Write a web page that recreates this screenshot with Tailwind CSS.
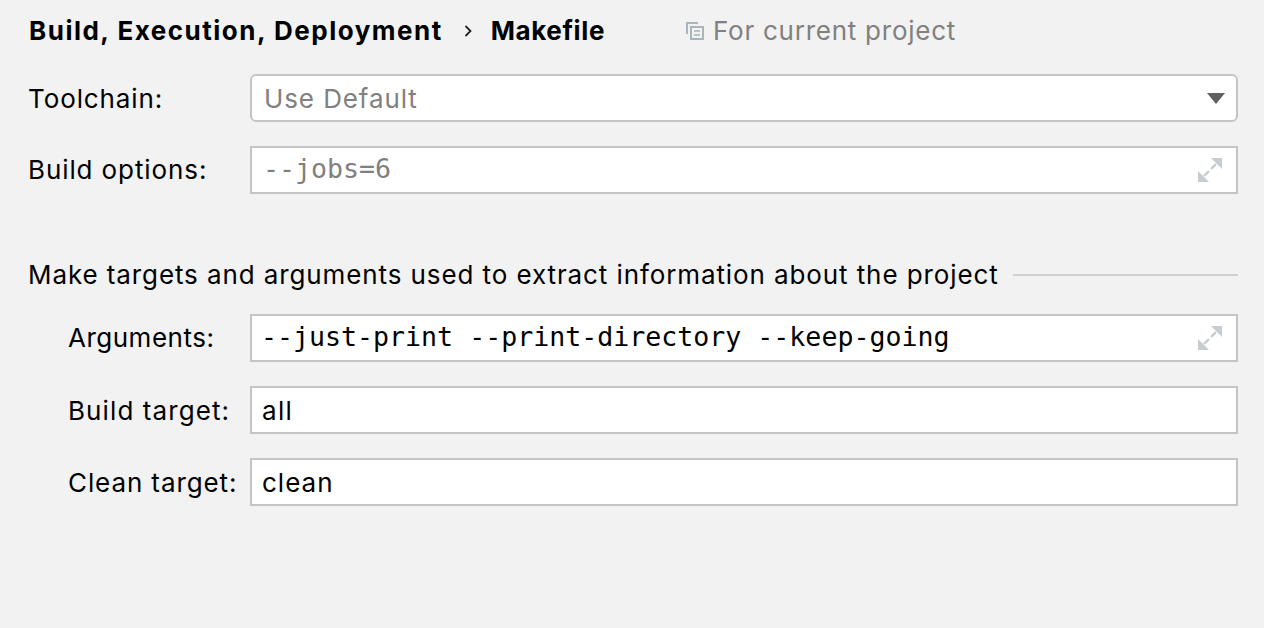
<!DOCTYPE html>
<html lang="en">
<head>
  <meta charset="UTF-8" />
  <title>Makefile settings</title>
  <script src="https://cdn.jsdelivr.net/npm/@tailwindcss/browser@4"></script>
</head>
<body class="bg-[#f2f2f2] text-black font-['Inter',sans-serif] text-[26px] leading-[32px] tracking-[0.9px] w-[1264px] h-[628px] overflow-hidden">
  <main class="pl-[28px] pr-[26px]">

    <!-- breadcrumb -->
    <header class="flex items-center h-[32px] mt-[15px] font-bold">
      <span class="ml-[1px] tracking-[1.5px]">Build, Execution, Deployment</span>
      <svg class="ml-[21px] w-[8px] h-[12px]" viewBox="0 0 8 12" fill="none" stroke="#222" stroke-width="1.8"><path d="M1.5 1l5 5-5 5"/></svg>
      <span class="ml-[19px] tracking-[0.6px]">Makefile</span>
      <svg class="ml-[81px] w-[18px] h-[18px]" viewBox="0 0 18 18" fill="none" stroke="#aab4bb" stroke-width="2"><path d="M12 1H1v11"/><rect x="5" y="5" width="12" height="12"/><path d="M8 9h6M8 13h6" stroke-width="1.5"/></svg>
      <span class="ml-[9px] font-normal text-[#808080] tracking-[0.75px]">For current project</span>
    </header>

    <!-- toolchain -->
    <div class="flex items-center h-[48px] mt-[27px]">
      <label class="w-[222px] pt-[2px]">Toolchain:</label>
      <div class="flex-1 h-full flex items-center justify-between bg-white border-2 border-[#c4c4c4] rounded-[6px] pl-[12px] pr-[11px] text-[#808080]">
        <span class="pt-[2px]">Use Default</span>
        <svg class="w-[18px] h-[11px]" viewBox="0 0 18 11" fill="#606060"><path d="M0 0h18l-9 11z"/></svg>
      </div>
    </div>

    <div class="flex items-center h-[48px] mt-[24px]">
      <label class="w-[222px]">Build options:</label>
      <div class="flex-1 h-full flex items-center justify-between bg-white border-2 border-[#c4c4c4] pl-[11px] pr-[14px] text-[#808080] font-['DejaVu_Sans_Mono',monospace] text-[26.6px] tracking-normal">
        <span class="pb-[2px]">--jobs=6</span>
        <svg class="w-[24px] h-[24px]" viewBox="0 0 24 24" fill="#c5cdd1" stroke="#c5cdd1"><path d="M24 0v11L13 0z" stroke="none"/><path d="M18 6l-5 5" stroke-width="2.4"/><path d="M0 24V13l11 11z" stroke="none"/><path d="M6 18l5-5" stroke-width="2.4"/></svg>
      </div>
    </div>

    <!-- make targets section -->
    <div class="flex items-center h-[32px] mt-[65px]">
      <span>Make targets and arguments used to extract information about the project</span>
      <div class="flex-1 ml-[14px] h-[2px] bg-[#d1d1d1]"></div>
    </div>

    <div class="flex items-center h-[48px] mt-[23px]">
      <label class="w-[182px] ml-[40px] tracking-[0.5px]">Arguments:</label>
      <div class="flex-1 h-full flex items-center justify-between bg-white border-2 border-[#c4c4c4] pl-[9px] pr-[14px] font-['DejaVu_Sans_Mono',monospace] text-[26.6px] tracking-normal">
        <span class="pb-[2px]">--just-print --print-directory --keep-going</span>
        <svg class="w-[24px] h-[24px]" viewBox="0 0 24 24" fill="#c5cdd1" stroke="#c5cdd1"><path d="M24 0v11L13 0z" stroke="none"/><path d="M18 6l-5 5" stroke-width="2.4"/><path d="M0 24V13l11 11z" stroke="none"/><path d="M6 18l5-5" stroke-width="2.4"/></svg>
      </div>
    </div>

    <div class="flex items-center h-[48px] mt-[24px]">
      <label class="w-[182px] ml-[40px] pt-[2px] tracking-[1.1px]">Build target:</label>
      <div class="flex-1 h-full flex items-center bg-white border-2 border-[#c4c4c4] pl-[10px] pt-[2px] tracking-[1.3px]">all</div>
    </div>

    <div class="flex items-center h-[48px] mt-[24px]">
      <label class="w-[182px] ml-[40px] pt-[2px]">Clean target:</label>
      <div class="flex-1 h-full flex items-center bg-white border-2 border-[#c4c4c4] pl-[10px] pt-[2px] tracking-[1px]">clean</div>
    </div>

  </main>
</body>
</html>
